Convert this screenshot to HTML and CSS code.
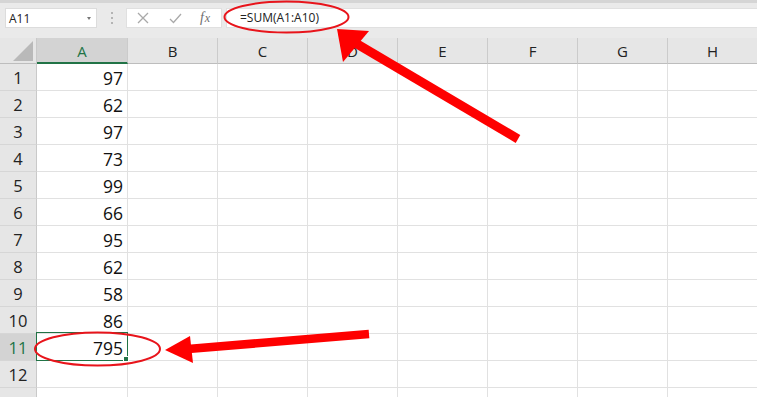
FILE: index.html
```html
<!DOCTYPE html>
<html>
<head>
<meta charset="utf-8">
<link rel="stylesheet" href="styles.css">
</head>
<body>
<div class="page">
  <div class="toolbar">
    <div class="namebox"><span>A11</span><span class="caret"></span></div>
    <div class="dots"><i></i><i></i><i></i></div>
    <div class="fbtns">
      <span class="btn"><svg width="12" height="12" viewBox="0 0 12 12"><path d="M1 1L11 11M11 1L1 11" stroke="#a9a9a9" stroke-width="1.3" fill="none"/></svg></span>
      <span class="btn"><svg width="13" height="11" viewBox="0 0 13 11"><path d="M1 6L4.5 9.5L12 1" stroke="#a9a9a9" stroke-width="1.3" fill="none"/></svg></span>
      <span class="btn fx"><i>f</i><span class="x">x</span></span>
    </div>
    <div class="finput">=SUM(A1:A10)</div>
  </div>
  <div class="grid">
    <div class="corner"><span class="tri"></span></div>
    <div class="ch sel">A</div><div class="ch">B</div><div class="ch">C</div><div class="ch">D</div><div class="ch">E</div><div class="ch">F</div><div class="ch">G</div><div class="ch">H</div>

    <div class="rh">1</div><div class="c num">97</div><div class="c"></div><div class="c"></div><div class="c"></div><div class="c"></div><div class="c"></div><div class="c"></div><div class="c"></div>
    <div class="rh">2</div><div class="c num">62</div><div class="c"></div><div class="c"></div><div class="c"></div><div class="c"></div><div class="c"></div><div class="c"></div><div class="c"></div>
    <div class="rh">3</div><div class="c num">97</div><div class="c"></div><div class="c"></div><div class="c"></div><div class="c"></div><div class="c"></div><div class="c"></div><div class="c"></div>
    <div class="rh">4</div><div class="c num">73</div><div class="c"></div><div class="c"></div><div class="c"></div><div class="c"></div><div class="c"></div><div class="c"></div><div class="c"></div>
    <div class="rh">5</div><div class="c num">99</div><div class="c"></div><div class="c"></div><div class="c"></div><div class="c"></div><div class="c"></div><div class="c"></div><div class="c"></div>
    <div class="rh">6</div><div class="c num">66</div><div class="c"></div><div class="c"></div><div class="c"></div><div class="c"></div><div class="c"></div><div class="c"></div><div class="c"></div>
    <div class="rh">7</div><div class="c num">95</div><div class="c"></div><div class="c"></div><div class="c"></div><div class="c"></div><div class="c"></div><div class="c"></div><div class="c"></div>
    <div class="rh">8</div><div class="c num">62</div><div class="c"></div><div class="c"></div><div class="c"></div><div class="c"></div><div class="c"></div><div class="c"></div><div class="c"></div>
    <div class="rh">9</div><div class="c num">58</div><div class="c"></div><div class="c"></div><div class="c"></div><div class="c"></div><div class="c"></div><div class="c"></div><div class="c"></div>
    <div class="rh">10</div><div class="c num">86</div><div class="c"></div><div class="c"></div><div class="c"></div><div class="c"></div><div class="c"></div><div class="c"></div><div class="c"></div>
    <div class="rh sel">11</div><div class="c num active">795</div><div class="c"></div><div class="c"></div><div class="c"></div><div class="c"></div><div class="c"></div><div class="c"></div><div class="c"></div>
    <div class="rh">12</div><div class="c"></div><div class="c"></div><div class="c"></div><div class="c"></div><div class="c"></div><div class="c"></div><div class="c"></div><div class="c"></div>
    <div class="rh"></div><div class="c"></div><div class="c"></div><div class="c"></div><div class="c"></div><div class="c"></div><div class="c"></div><div class="c"></div><div class="c"></div>
  </div>
  <svg class="annot" width="757" height="397" viewBox="0 0 757 397">
    <ellipse cx="286.5" cy="17" rx="62" ry="15.5" fill="none" stroke="#e8141b" stroke-width="2"/>
    <ellipse cx="97.5" cy="349" rx="62.5" ry="16.5" fill="none" stroke="#e8141b" stroke-width="2"/>
    <line x1="352" y1="41" x2="518" y2="139" stroke="#fe0000" stroke-width="9"/>
    <polygon points="337,29 369,31 343,62" fill="#fe0000"/>
    <line x1="369" y1="334" x2="188" y2="349" stroke="#fe0000" stroke-width="8.5"/>
    <polygon points="165,350 190,336 193,363" fill="#fe0000"/>
  </svg>
</div>
</body>
</html>
```
FILE: styles.css
```css
html, body {
  margin: 0;
  padding: 0;
  background: #ffffff;
}
.page {
  position: relative;
  width: 757px;
  height: 397px;
  overflow: hidden;
  font-family: "Open Sans", "Liberation Sans", sans-serif;
  color: #1f1f1f;
}
.toolbar {
  box-sizing: border-box;
  height: 38px;
  border-top: 3px solid #d5d5d5;
  background: #eaeaea;
  padding-top: 5px;
  display: flex;
  align-items: flex-start;
}
.namebox {
  box-sizing: border-box;
  margin-left: 5px;
  width: 92px;
  height: 20px;
  background: #fff;
  border: 1px solid #dcdcdc;
  display: flex;
  align-items: center;
  justify-content: space-between;
  padding: 0 5px 0 3px;
  font-size: 12px;
  color: #222;
}
.caret {
  width: 0;
  height: 0;
  border-left: 2.5px solid transparent;
  border-right: 2.5px solid transparent;
  border-top: 3px solid #777;
}
.dots {
  width: 29px;
  height: 20px;
  display: flex;
  flex-direction: column;
  align-items: center;
  justify-content: center;
  gap: 3px;
}
.dots i {
  display: block;
  width: 2px;
  height: 2px;
  background: #b4b4b4;
}
.fbtns {
  box-sizing: border-box;
  width: 96px;
  height: 20px;
  background: #fff;
  border: 1px solid #e0e0e0;
  display: flex;
  align-items: center;
}
.btn {
  width: 33px;
  height: 18px;
  display: flex;
  align-items: center;
  justify-content: center;
}
.fx {
  font-family: "Liberation Serif", serif;
  font-style: italic;
  font-size: 14px;
  color: #6e6e6e;
  margin-left: -2px;
}
.fx .x {
  font-size: 12px;
  margin-left: 1px;
}
.finput {
  box-sizing: border-box;
  margin-left: 4px;
  flex: 1;
  height: 20px;
  background: #fff;
  border: 1px solid #e0e0e0;
  border-right: none;
  padding-left: 13px;
  font-size: 12px;
  line-height: 18px;
  color: #222;
}
.grid {
  display: grid;
  grid-template-columns: 37px 91px repeat(7, 90px);
  grid-template-rows: 26px;
  grid-auto-rows: 27px;
}
.corner {
  position: relative;
  background: #e6e6e6;
  border-right: 1px solid #c9c9c9;
  border-bottom: 1px solid #bdbdbd;
  box-sizing: border-box;
}
.tri {
  position: absolute;
  right: 3px;
  bottom: 2px;
  width: 20px;
  height: 20px;
  background: #b9b9b9;
  clip-path: polygon(100% 0, 100% 100%, 0 100%);
}
.ch {
  box-sizing: border-box;
  background: #e6e6e6;
  border-right: 1px solid #cbcbcb;
  border-bottom: 1px solid #bdbdbd;
  display: flex;
  align-items: center;
  justify-content: center;
  font-size: 15px;
  color: #222;
  padding-top: 1px;
}
.ch.sel {
  background: #d3d3d3;
  color: #217346;
  border-bottom: 2px solid #217346;
  padding-top: 2px;
}
.rh {
  box-sizing: border-box;
  background: #e6e6e6;
  border-right: 1px solid #c9c9c9;
  border-bottom: 1px solid #d6d6d6;
  display: flex;
  align-items: center;
  justify-content: center;
  font-size: 16.5px;
  color: #222;
  padding-top: 1px;
}
.rh.sel {
  background: #d3d3d3;
  color: #217346;
}
.c {
  box-sizing: border-box;
  border-right: 1px solid #e1e1e1;
  border-bottom: 1px solid #e1e1e1;
  background: #fff;
}
.num {
  display: flex;
  align-items: center;
  justify-content: flex-end;
  padding-right: 4px;
  padding-top: 2px;
  font-size: 17.5px;
  color: #111;
}
.active {
  position: relative;
}
.active::before {
  content: "";
  position: absolute;
  left: -1px;
  top: -2px;
  right: -1px;
  bottom: -1px;
  border: 1.5px solid #217346;
}
.active::after {
  content: "";
  position: absolute;
  right: -2px;
  bottom: -2px;
  width: 4px;
  height: 4px;
  background: #217346;
  border: 1px solid #fff;
}
.annot {
  position: absolute;
  left: 0;
  top: 0;
  pointer-events: none;
}
```
